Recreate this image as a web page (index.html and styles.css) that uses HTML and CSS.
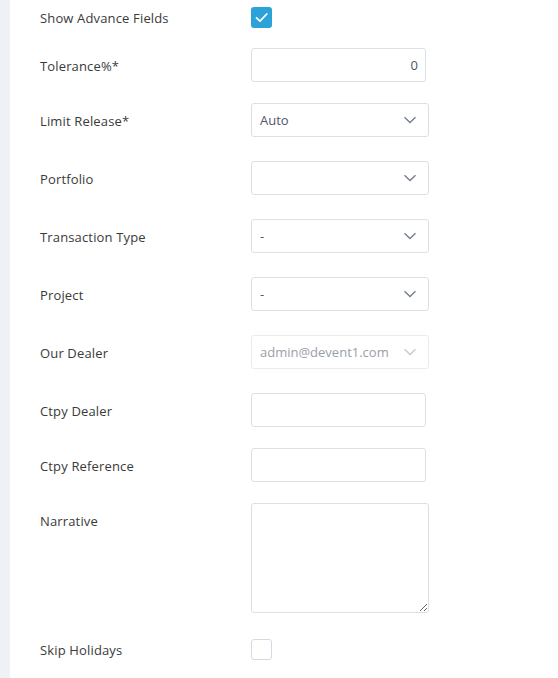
FILE: index.html
```html
<!DOCTYPE html>
<html>
<head>
<meta charset="utf-8">
<link rel="stylesheet" href="styles.css">
</head>
<body>
<div class="page">
  <div class="sidebar"></div>
  <form class="form">
    <div class="row check-row g20">
      <label class="label">Show Advance Fields</label>
      <span class="checkbox checked">
        <svg viewBox="0 0 21 21" width="21" height="21"><path d="M5.5 10.8 L9 14.2 L15.8 7" fill="none" stroke="#fff" stroke-width="1.8" stroke-linecap="round" stroke-linejoin="round"/></svg>
      </span>
    </div>
    <div class="row g21">
      <label class="label">Tolerance%*</label>
      <input class="input num" type="text" value="0">
    </div>
    <div class="row g24">
      <label class="label">Limit Release*</label>
      <div class="select"><span class="value">Auto</span><svg class="chev" viewBox="0 0 14 8" width="14" height="8"><path d="M1.5 1.2 L7 6.5 L12.5 1.2" fill="none" stroke="#737b8c" stroke-width="1.3"/></svg></div>
    </div>
    <div class="row g24">
      <label class="label">Portfolio</label>
      <div class="select"><span class="value"></span><svg class="chev" viewBox="0 0 14 8" width="14" height="8"><path d="M1.5 1.2 L7 6.5 L12.5 1.2" fill="none" stroke="#737b8c" stroke-width="1.3"/></svg></div>
    </div>
    <div class="row g24">
      <label class="label">Transaction Type</label>
      <div class="select"><span class="value">-</span><svg class="chev" viewBox="0 0 14 8" width="14" height="8"><path d="M1.5 1.2 L7 6.5 L12.5 1.2" fill="none" stroke="#737b8c" stroke-width="1.3"/></svg></div>
    </div>
    <div class="row g24">
      <label class="label">Project</label>
      <div class="select"><span class="value">-</span><svg class="chev" viewBox="0 0 14 8" width="14" height="8"><path d="M1.5 1.2 L7 6.5 L12.5 1.2" fill="none" stroke="#737b8c" stroke-width="1.3"/></svg></div>
    </div>
    <div class="row g24">
      <label class="label">Our Dealer</label>
      <div class="select disabled"><span class="value">admin@devent1.com</span><svg class="chev" viewBox="0 0 14 8" width="14" height="8"><path d="M1.5 1.2 L7 6.5 L12.5 1.2" fill="none" stroke="#c3c7cf" stroke-width="1.3"/></svg></div>
    </div>
    <div class="row g21">
      <label class="label">Ctpy Dealer</label>
      <input class="input" type="text" value="">
    </div>
    <div class="row g21">
      <label class="label">Ctpy Reference</label>
      <input class="input" type="text" value="">
    </div>
    <div class="row g26">
      <label class="label">Narrative</label>
      <textarea class="textarea"></textarea>
    </div>
    <div class="row check-row">
      <label class="label">Skip Holidays</label>
      <span class="checkbox"></span>
    </div>
  </form>
</div>
</body>
</html>
```

FILE: styles.css
```css
html, body {
  margin: 0;
  padding: 0;
  background: #ffffff;
}

.page {
  display: flex;
  min-height: 678px;
  font-family: "Open Sans", "Noto Sans", sans-serif;
  font-size: 13px;
  color: #3a3a3a;
}

.sidebar {
  width: 10px;
  flex: none;
  background: #eef1f5;
}

.form {
  flex: 1;
  padding: 7px 0 0 30px;
  display: flex;
  flex-direction: column;
}

.row {
  display: grid;
  grid-template-columns: 211px auto;
  align-items: start;
}

.check-row {
  align-items: center;
}

.g20 { margin-bottom: 20px; }
.g21 { margin-bottom: 21px; }
.g24 { margin-bottom: 24px; }
.g26 { margin-bottom: 26px; }

.label {
  line-height: 36px;
  height: 34px;
  letter-spacing: 0.15px;
  white-space: nowrap;
}

.check-row .label {
  line-height: 20px;
  height: 20px;
}

.checkbox {
  width: 19px;
  height: 19px;
  border: 1px solid #d5d9e2;
  border-radius: 3px;
  display: block;
  box-sizing: content-box;
}

.checkbox.checked {
  width: 21px;
  height: 21px;
  border: none;
  background: #2ba3d8;
}

.checkbox svg {
  display: block;
}

.input {
  box-sizing: border-box;
  width: 175px;
  height: 34px;
  margin: 0;
  border: 1px solid #dcdfe6;
  border-radius: 3px;
  padding: 0 7px 0 9px;
  font-family: inherit;
  font-size: 13px;
  color: #4f5668;
  background: #fff;
  outline: none;
}

.input.num {
  text-align: right;
}

.select {
  box-sizing: border-box;
  width: 178px;
  height: 34px;
  border: 1px solid #dcdfe6;
  border-radius: 3px;
  display: flex;
  align-items: center;
  justify-content: space-between;
  padding: 0 11px 0 8px;
  color: #4f5668;
  background: #fff;
}

.select.disabled {
  border-color: #e9ebef;
  color: #9a9ea8;
}

.chev {
  display: block;
  flex: none;
}

.textarea {
  box-sizing: border-box;
  width: 178px;
  height: 110px;
  margin: 0;
  border: 1px solid #dcdfe6;
  border-radius: 3px;
  font-family: inherit;
  font-size: 13px;
  padding: 6px 8px;
  resize: vertical;
  display: block;
}
```
